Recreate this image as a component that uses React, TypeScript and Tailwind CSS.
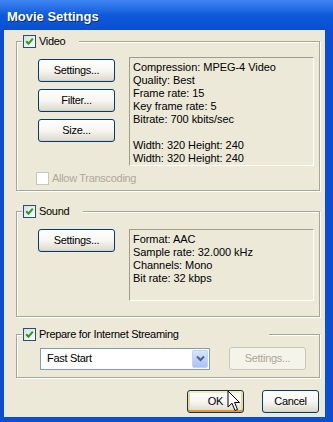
import React from "react";

const btn =
  "flex items-center justify-center h-[23px] rounded-[3px] border border-[#003c74] bg-linear-to-b from-white via-[#f7f6f2] to-[#dcd8cb] shadow-[inset_0_-1px_0_#d6d0c0] text-black";

const CheckBox: React.FC<{ checked?: boolean; disabled?: boolean }> = ({ checked, disabled }) => (
  <span
    className={`flex w-[13px] h-[13px] shrink-0 items-center justify-center border ${
      disabled ? "border-[#cac8bb] bg-white" : "border-[#1c5180] bg-linear-to-br from-[#dcdcd7] to-white"
    }`}
  >
    {checked && (
      <svg width="11" height="11" viewBox="0 0 11 11">
        <path d="M2.2 5.2 L4.5 7.6 L8.8 2.6" fill="none" stroke="#21a121" strokeWidth={2.1} />
      </svg>
    )}
  </span>
);

const Group: React.FC<{ label: string; legendWidth?: string; className?: string; children: React.ReactNode }> = ({
  label,
  legendWidth = "",
  className = "",
  children,
}) => (
  <fieldset
    className={`border border-[#a7a697] shadow-[inset_1px_1px_0_#fff,1px_1px_0_#fff] ${className}`}
  >
    <legend className={`ml-[5px] pl-[1px] pr-[14px] bg-[#ece9d8] ${legendWidth}`}>
      <div className="flex items-center gap-[3px] h-[14px]">
        <CheckBox checked />
        <span>{label}</span>
      </div>
    </legend>
    {children}
  </fieldset>
);

const InfoBox: React.FC<{ lines: string[]; className: string }> = ({ lines, className }) => (
  <div
    className={`border border-t-[#9d9c8f] border-l-[#9d9c8f] border-b-white border-r-white pl-[3px] pt-[3px] leading-[13px] tracking-[-0.05px] ${className}`}
  >
    {lines.map((l, i) => (
      <div key={i} className="h-[13px] whitespace-pre">
        {l}
      </div>
    ))}
  </div>
);

export default function App() {
  return (
    <div className="w-[333px] h-[422px] flex flex-col bg-[#0a4fd2] font-['Liberation_Sans',Arial,sans-serif] text-[11px] tracking-[-0.3px] text-black">
      {/* title bar */}
      <div className="h-[30px] shrink-0 flex items-center pl-[7px] pt-[3px] bg-linear-to-b from-[#3f86f3] via-[#0d5ad9] to-[#0a4fd2]">
        <span className="text-[13px] font-bold text-white tracking-[0px] [text-shadow:1px_1px_0_#0b2a80]">
          Movie Settings
        </span>
      </div>

      {/* body */}
      <div className="flex-1 ml-[4px] mr-[8px] mb-[5px] bg-[#ece9d8] pl-[12px] pr-[5px] pt-[4px] flex flex-col">
        <Group label="Video">
          <div className="flex ml-[21px] mt-[9px]">
            <div className="flex flex-col gap-[7px] mt-[2px] w-[77px]">
              <button className={btn}>Settings...</button>
              <button className={btn}>Filter...</button>
              <button className={btn}>Size...</button>
            </div>
            <InfoBox
              className="ml-[14px] w-[185px] h-[109px]"
              lines={[
                "Compression: MPEG-4 Video",
                "Quality: Best",
                "Frame rate: 15",
                "Key frame rate: 5",
                "Bitrate: 700 kbits/sec",
                " ",
                "Width: 320 Height: 240",
                "Width: 320 Height: 240",
              ]}
            />
          </div>
          <div className="flex items-center gap-[3px] ml-[19px] mt-[6px] mb-[5px] h-[13px] text-[#aca899]">
            <CheckBox disabled />
            <span>Allow Transcoding</span>
          </div>
        </Group>

        <Group label="Sound" className="mt-[13px]">
          <div className="flex ml-[21px] mt-[11px] mb-[15px]">
            <button className={`${btn} w-[77px]`}>Settings...</button>
            <InfoBox
              className="ml-[14px] w-[185px] h-[72px]"
              lines={["Format: AAC", "Sample rate: 32.000 kHz", "Channels: Mono", "Bit rate: 32 kbps"]}
            />
          </div>
        </Group>

        <Group label="Prepare for Internet Streaming" legendWidth="w-[247px]" className="mt-[10px]">
          <div className="flex items-center ml-[23px] mt-[6px] mb-[7px]">
            <div className="flex items-center w-[170px] h-[22px] border border-[#7f9db9] bg-white pl-[6px] pr-[1px]">
              <span className="flex-1">Fast Start</span>
              <span className="flex items-center justify-center w-[16px] h-[18px] rounded-[2px] border border-[#c3d3fd] bg-linear-to-b from-[#d8e4fd] to-[#a9c2f3]">
                <svg width="9" height="7" viewBox="0 0 9 7">
                  <path d="M1 1.5 L4.5 5 L8 1.5" fill="none" stroke="#4d6185" strokeWidth={2} />
                </svg>
              </span>
            </div>
            <div className="ml-[19px] w-[77px] h-[23px] flex items-center justify-center rounded-[3px] border border-[#c9c7ba] bg-[#f5f4ea] text-[#aca899]">
              Settings...
            </div>
          </div>
        </Group>

        <div className="flex justify-end gap-[18px] mt-[12px] pr-[1px]">
          <div className="relative">
            <button
              className={`${btn} w-[57px] shadow-[inset_0_-2px_0_#e5972f,inset_0_2px_0_#fce7b4,inset_2px_0_0_#f8d389,inset_-2px_0_0_#f8d389]`}
            >
              OK
            </button>
            <svg className="absolute left-[40px] top-0" width="14" height="22" viewBox="0 0 14 22">
              <path
                d="M1 1 L1 17 L5 13.2 L8 20.5 L10.5 19.5 L7.6 12.5 L12.5 12.5 Z"
                fill="#fff"
                stroke="#000"
                strokeWidth={1}
                strokeLinejoin="round"
              />
            </svg>
          </div>
          <button className={`${btn} w-[57px]`}>Cancel</button>
        </div>
      </div>
    </div>
  );
}
